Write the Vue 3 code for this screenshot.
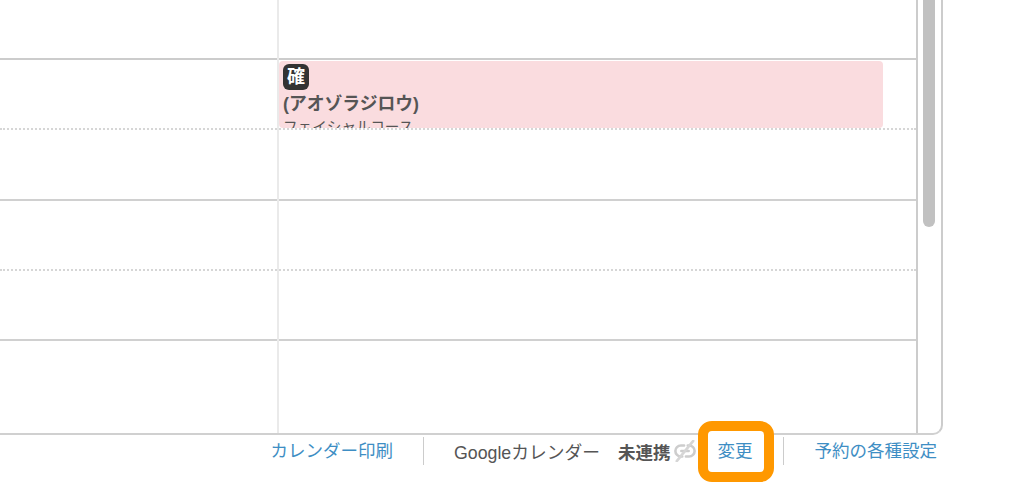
<script setup>
const rows = [
  { id: 1, cls: 'top' },
  { id: 2, cls: 'half', event: true },
  { id: 3, cls: 'hour' },
  { id: 4, cls: 'half' },
  { id: 5, cls: 'hour short' },
  { id: 6, cls: 'last' }
]
</script>

<template>
  <div class="page">
    <section class="panel">
      <div class="grid">
        <div v-for="r in rows" :key="r.id" class="row" :class="r.cls">
          <div v-if="r.event" class="event">
            <span class="badge">確</span>
            <div class="name">(アオゾラジロウ)</div>
            <div class="course">フェイシャルコース</div>
          </div>
        </div>
        <div class="divider"></div>
      </div>
      <div class="track"><div class="thumb"></div></div>
    </section>
    <footer class="footer">
      <a class="link">カレンダー印刷</a>
      <span class="sep"></span>
      <span class="google">Googleカレンダー</span>
      <strong class="status">未連携</strong>
      <svg class="unlink" viewBox="0 0 24 24" width="22" height="22" fill="none" stroke="#cdcdcd" stroke-width="2.8" stroke-linecap="round">
        <path d="M11 6H7.5a6 6 0 0 0 0 12H9" />
        <path d="M13 18h3.5a6 6 0 0 0 0-12H15" />
        <path d="M8 12h8" />
        <path d="M3 23 21 1" stroke="#d6d6d6" />
      </svg>
      <a class="link change">変更</a>
      <span class="sep"></span>
      <a class="link settings">予約の各種設定</a>
    </footer>
  </div>
</template>

<style scoped>
.page {
  width: 1024px;
  height: 484px;
  overflow: hidden;
  background: #fff;
  font-family: "Liberation Sans", "Noto Sans CJK JP", sans-serif;
  color: #555;
}
.panel {
  display: flex;
  width: 943px;
  height: 435px;
  box-sizing: border-box;
  border-right: 2px solid #ccc;
  border-bottom: 2px solid #d0d0d0;
  border-bottom-right-radius: 10px;
  overflow: hidden;
}
.grid {
  position: relative;
  width: 918px;
  flex: none;
  box-sizing: border-box;
  border-right: 2px solid #ccc;
}
.row {
  position: relative;
  box-sizing: border-box;
}
.top {
  height: 60px;
  border-bottom: 2px solid #ccc;
}
.half {
  height: 70px;
  border-bottom: 2px dotted #d6d6d6;
}
.hour {
  height: 71px;
  border-bottom: 2px solid #d0d0d0;
}
.short {
  height: 70px;
}
.last {
  height: 94px;
}
.divider {
  position: absolute;
  top: 0;
  bottom: 0;
  left: 277px;
  width: 2px;
  background: #eaeaea;
}
.event {
  position: absolute;
  z-index: 1;
  top: 1px;
  left: 279px;
  width: 604px;
  height: 67px;
  box-sizing: border-box;
  padding: 3px 0 0 4px;
  overflow: hidden;
  background: #fadcdf;
  border-radius: 4px;
  font-size: 17.8px;
  line-height: 24px;
}
.badge {
  display: block;
  width: 26px;
  height: 26px;
  border-radius: 6px;
  background: #333;
  color: #fff;
  font-size: 18px;
  font-weight: 700;
  line-height: 26px;
  text-align: center;
}
.name {
  margin-top: 2px;
  font-weight: 700;
  color: #555;
  white-space: nowrap;
}
.course {
  margin-top: -1px;
  font-size: 14.6px;
  line-height: 24px;
  white-space: nowrap;
}
.track {
  flex: 1;
  padding-left: 5px;
}
.thumb {
  width: 12px;
  height: 227px;
  background: #c1c1c1;
  border-radius: 0 0 6px 6px;
}
.footer {
  display: flex;
  align-items: center;
  justify-content: flex-end;
  height: 32px;
  width: 937px;
  font-size: 17.5px;
  white-space: nowrap;
}
.link {
  color: #3e8ec4;
  line-height: 32px;
}
.settings {
  margin-left: 1px;
}
.sep {
  width: 1px;
  height: 28px;
  margin: 0 30px;
  background: #ccc;
}
.google {
  font-size: 17.75px;
  color: #555;
}
.status {
  margin-left: 18px;
  font-weight: 700;
  color: #555;
}
.unlink {
  margin-left: 3px;
  flex: none;
}
.change {
  position: relative;
  z-index: 2;
  margin-left: 22px;
  width: 35px;
  text-align: center;
}
.change::before {
  content: "";
  position: absolute;
  z-index: -1;
  left: -20px;
  top: -14px;
  width: 56px;
  height: 41px;
  border: 10px solid #ff9800;
  border-radius: 14px;
  background: #fff;
}
</style>
